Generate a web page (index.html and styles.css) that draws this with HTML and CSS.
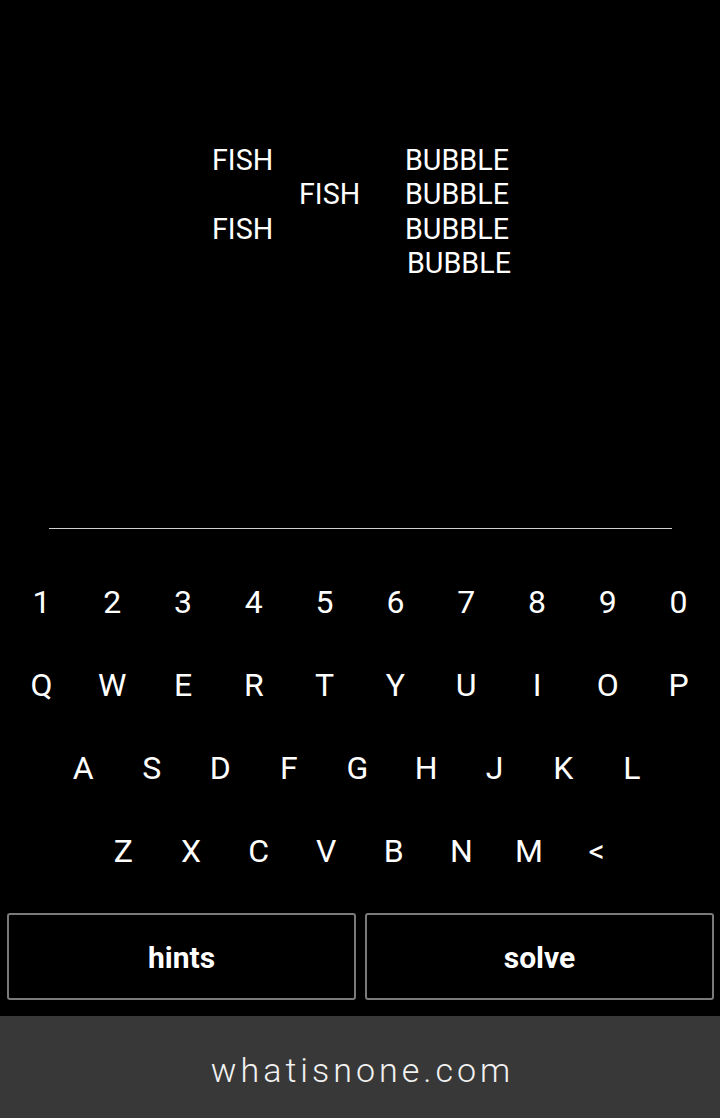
FILE: index.html
```html
<!DOCTYPE html>
<html>
<head>
<meta charset="utf-8">
<link rel="stylesheet" href="styles.css">
</head>
<body>
<div class="app">
  <div class="words">
    <div class="grid">
      <span class="w c1">FISH</span><span class="w c3">BUBBLE</span>
      <span class="w c2">FISH</span><span class="w c3">BUBBLE</span>
      <span class="w c1">FISH</span><span class="w c3">BUBBLE</span>
      <span class="w c3 shift">BUBBLE</span>
    </div>
  </div>
  <div class="divider"></div>
  <div class="keyboard">
    <div class="row r10"><span>1</span><span>2</span><span>3</span><span>4</span><span>5</span><span>6</span><span>7</span><span>8</span><span>9</span><span>0</span></div>
    <div class="row r10"><span>Q</span><span>W</span><span>E</span><span>R</span><span>T</span><span>Y</span><span>U</span><span>I</span><span>O</span><span>P</span></div>
    <div class="row r9"><span>A</span><span>S</span><span>D</span><span>F</span><span>G</span><span>H</span><span>J</span><span>K</span><span>L</span></div>
    <div class="row r8"><span>Z</span><span>X</span><span>C</span><span>V</span><span>B</span><span>N</span><span>M</span><span>&lt;</span></div>
  </div>
  <div class="actions">
    <button class="btn">hints</button>
    <button class="btn">solve</button>
  </div>
  <div class="footer">whatisnone.com</div>
</div>
</body>
</html>
```

FILE: styles.css
```css
html, body {
  margin: 0;
  padding: 0;
  background: #000;
}
.app {
  width: 720px;
  height: 1118px;
  display: flex;
  flex-direction: column;
  color: #fff;
  font-family: Roboto, "Noto Sans", sans-serif;
}
.words {
  height: 528px;
  box-sizing: border-box;
  padding-top: 143px;
}
.grid {
  display: grid;
  grid-template-columns: 87px 106px auto;
  margin-left: 212px;
}
.w {
  font-size: 28.7px;
  line-height: 34.3px;
  height: 34.3px;
}
.c1 { grid-column: 1; }
.c2 { grid-column: 2; }
.c3 { grid-column: 3; }
.shift { padding-left: 2px; }
.divider {
  height: 1px;
  background: #cfcfcf;
  margin: 0 48px 0 49px;
}
.keyboard {
  padding-top: 31px;
  display: flex;
  flex-direction: column;
}
.row {
  display: flex;
  justify-content: center;
  height: 83px;
  align-items: center;
  font-size: 32px;
}
.row span {
  text-align: center;
}
.r10 span { width: 70.8px; }
.r9 { padding-right: 5px; }
.r9 span { width: 68.6px; }
.r8 span { width: 67.6px; }
.actions {
  display: flex;
  gap: 9px;
  padding: 0 6px 0 7px;
  margin-top: 21px;
}
.btn {
  flex: 1;
  height: 87px;
  background: #000;
  color: #fff;
  border: 2px solid #7a7a7a;
  border-radius: 3px;
  font-family: Roboto, "Noto Sans", sans-serif;
  font-weight: 700;
  font-size: 30px;
  padding: 2px 0 0;
}
.footer {
  margin-top: 16px;
  flex: 1;
  background: #383838;
  display: flex;
  align-items: center;
  justify-content: center;
  box-sizing: border-box;
  padding: 6px 0 0 5px;
  font-weight: 300;
  font-size: 34px;
  letter-spacing: 4px;
  color: #f2f2f2;
}
```
